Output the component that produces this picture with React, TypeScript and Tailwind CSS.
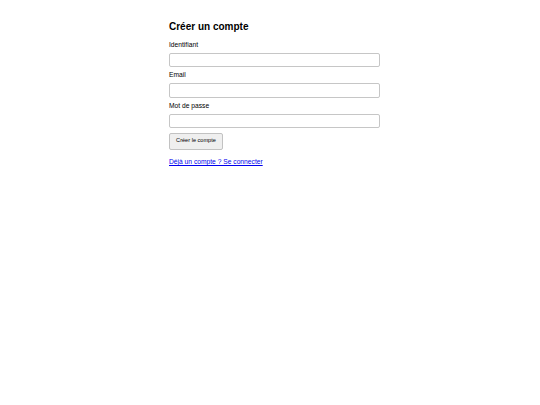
export default function App() {
  return (
    <div className="min-h-screen bg-white text-black" style={{ fontFamily: '"Liberation Sans", Arial, sans-serif' }}>
      <div className="mx-auto w-[220px] pl-[9px] pt-[21px]">
        <h2 className="text-[10px] leading-[12px] font-bold">Créer un compte</h2>
        <form className="mt-[7.7px] flex flex-col" onSubmit={(e) => e.preventDefault()}>
          <Field label="Identifiant" type="text" />
          <Field label="Email" type="email" />
          <Field label="Mot de passe" type="password" />
          <div className="flex">
            <button
              type="submit"
              className="mt-[0.5px] h-[17px] w-[54px] rounded-[2px] border border-[#c2c2c2] bg-[#efefef] text-[5.6px] leading-none text-black"
            >
              Créer le compte
            </button>
          </div>
        </form>
        <a href="#" className="mt-[8.7px] block w-fit text-[6.7px] leading-[8px] text-[#0000ee] underline">
          Déjà un compte ? Se connecter
        </a>
      </div>
    </div>
  );
}

function Field({ label, type }: { label: string; type: string }) {
  return (
    <label className="flex flex-col">
      <span className="text-[6.7px] leading-[8px]">{label}</span>
      <input
        type={type}
        className="mt-[4px] mb-[4px] h-[14.5px] w-[211px] rounded-[2px] border border-[#c6c6c6] bg-white outline-none"
      />
    </label>
  );
}
